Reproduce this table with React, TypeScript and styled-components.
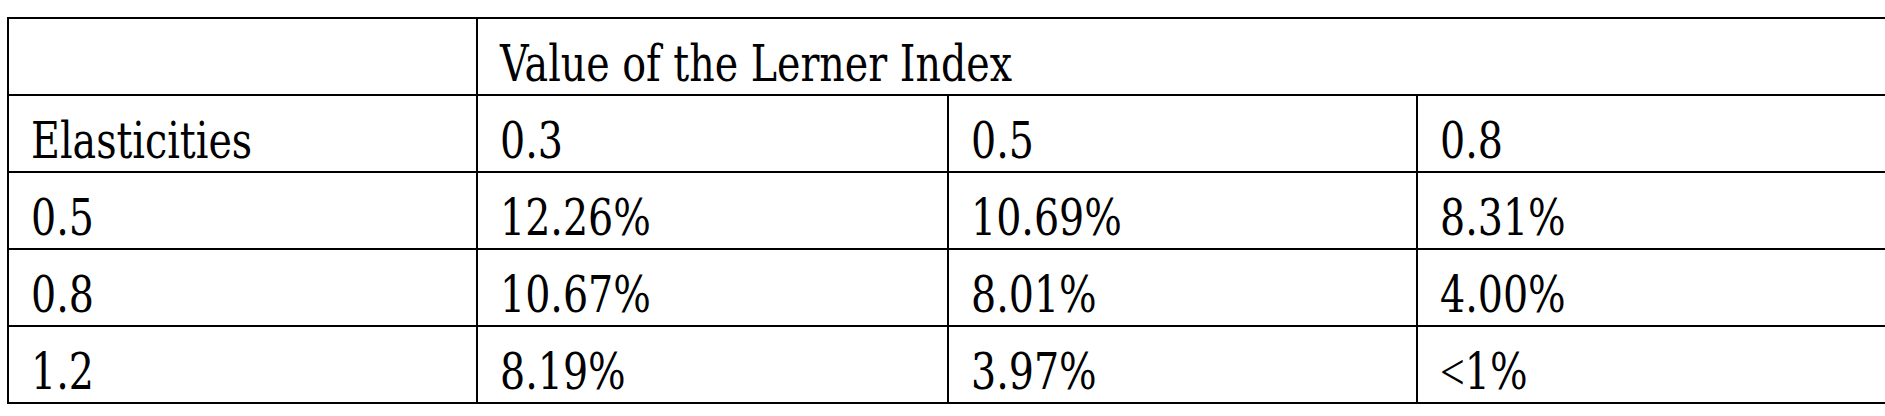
import styled, { createGlobalStyle } from "styled-components";

const GlobalStyle = createGlobalStyle`
    html, body {
        margin: 0;
        padding: 0;
        background: #ffffff;
        overflow: hidden;
    }
`;

const rows = [
    { label: "0.5", values: ["12.26%", "10.69%", "8.31%"] },
    { label: "0.8", values: ["10.67%", "8.01%", "4.00%"] },
    { label: "1.2", values: ["8.19%", "3.97%", "<1%"] },
];

const lernerValues = ["0.3", "0.5", "0.8"];

// "<" comes from a lighter face in the source document
function renderValue(v: string) {
    if (v.startsWith("<")) {
        return (
            <>
                <LessThan>&lt;</LessThan>
                {v.slice(1)}
            </>
        );
    }
    return v;
}

function App() {
    return (
        <>
            <GlobalStyle />
            <Page>
                <Table>
                    <colgroup>
                        <col style={{ width: 469 }} />
                        <col style={{ width: 471 }} />
                        <col style={{ width: 469 }} />
                        <col style={{ width: 471 }} />
                    </colgroup>
                    <tbody>
                        <Row>
                            <Cell />
                            <Cell colSpan={3}>
                                <Text>Value of the Lerner Index</Text>
                            </Cell>
                        </Row>
                        <Row>
                            <Cell>
                                <Text>Elasticities</Text>
                            </Cell>
                            {lernerValues.map((v) => (
                                <Cell key={v}>
                                    <Text>{v}</Text>
                                </Cell>
                            ))}
                        </Row>
                        {rows.map((row) => (
                            <Row key={row.label}>
                                <Cell>
                                    <Text>{row.label}</Text>
                                </Cell>
                                {row.values.map((v, i) => (
                                    <Cell key={i}>
                                        <Text>{renderValue(v)}</Text>
                                    </Cell>
                                ))}
                            </Row>
                        ))}
                    </tbody>
                </Table>
            </Page>
        </>
    );
}

export default App;

const Page = styled.div`
    width: 1885px;
    height: 416px;
    padding: 17px 0 0 7px;
    box-sizing: border-box;
`;

const Table = styled.table`
    border-collapse: collapse;
    table-layout: fixed;
    width: 1880px;
    font-family: "DejaVu Serif", "Liberation Serif", serif;
    font-stretch: condensed;
    font-size: 50px;
    color: #000000;
`;

const Row = styled.tr`
    height: 77px;
`;

const Cell = styled.td`
    border: 2px solid #000000;
    padding: 0 0 5px 22px;
    vertical-align: bottom;
    line-height: 1;
    white-space: nowrap;
`;

// the document face is narrower than the installed condensed cut
const Text = styled.span`
    display: inline-block;
    transform: scaleX(0.88);
    transform-origin: left bottom;
`;

const LessThan = styled.span`
    font-family: "Liberation Serif", serif;
    font-stretch: normal;
`;
